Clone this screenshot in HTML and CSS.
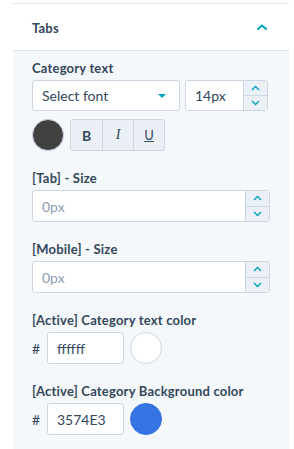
FILE: index.html
```html
<!DOCTYPE html>
<html>
<head>
<meta charset="utf-8">
<link rel="stylesheet" href="styles.css">
</head>
<body>
<div class="panel">
  <div class="panel-header">
    <span class="panel-title">Tabs</span>
    <svg class="chev-up" width="10" height="6" viewBox="0 0 10 6"><path d="M1 5 L5 1.5 L9 5" fill="none" stroke="#00a4bd" stroke-width="2" stroke-linecap="round" stroke-linejoin="round"/></svg>
  </div>
  <div class="panel-body">
    <div class="field">
      <div class="label">Category text</div>
      <div class="row">
        <div class="select">
          <span>Select font</span>
          <svg class="caret" width="8" height="4" viewBox="0 0 8 4"><path d="M0 0 L8 0 L4 4 Z" fill="#00a4bd"/></svg>
        </div>
        <div class="num num-small">
          <div class="num-value">14px</div>
          <div class="stepper">
            <div class="step"><svg width="9" height="6" viewBox="0 0 9 6"><path d="M1 5 L4.5 1.5 L8 5" fill="none" stroke="#00a4bd" stroke-width="1.4"/></svg></div>
            <div class="step"><svg width="9" height="6" viewBox="0 0 9 6"><path d="M1 1 L4.5 4.5 L8 1" fill="none" stroke="#00a4bd" stroke-width="1.4"/></svg></div>
          </div>
        </div>
      </div>
      <div class="row row-style">
        <div class="swatch swatch-dark"></div>
        <div class="btn-group">
          <div class="tbtn tb-b">B</div>
          <div class="tbtn tb-i">I</div>
          <div class="tbtn tb-u">U</div>
        </div>
      </div>
    </div>

    <div class="field">
      <div class="label">[Tab] - Size</div>
      <div class="num num-wide">
        <div class="num-value placeholder">0px</div>
        <div class="stepper">
          <div class="step"><svg width="9" height="6" viewBox="0 0 9 6"><path d="M1 5 L4.5 1.5 L8 5" fill="none" stroke="#00a4bd" stroke-width="1.4"/></svg></div>
          <div class="step"><svg width="9" height="6" viewBox="0 0 9 6"><path d="M1 1 L4.5 4.5 L8 1" fill="none" stroke="#00a4bd" stroke-width="1.4"/></svg></div>
        </div>
      </div>
    </div>

    <div class="field">
      <div class="label">[Mobile] - Size</div>
      <div class="num num-wide">
        <div class="num-value placeholder">0px</div>
        <div class="stepper">
          <div class="step"><svg width="9" height="6" viewBox="0 0 9 6"><path d="M1 5 L4.5 1.5 L8 5" fill="none" stroke="#00a4bd" stroke-width="1.4"/></svg></div>
          <div class="step"><svg width="9" height="6" viewBox="0 0 9 6"><path d="M1 1 L4.5 4.5 L8 1" fill="none" stroke="#00a4bd" stroke-width="1.4"/></svg></div>
        </div>
      </div>
    </div>

    <div class="field">
      <div class="label">[Active] Category text color</div>
      <div class="row color-row">
        <span class="hash">#</span>
        <div class="hex">ffffff</div>
        <div class="swatch swatch-white"></div>
      </div>
    </div>

    <div class="field">
      <div class="label">[Active] Category Background color</div>
      <div class="row color-row">
        <span class="hash">#</span>
        <div class="hex">3574E3</div>
        <div class="swatch swatch-blue"></div>
      </div>
    </div>
  </div>
</div>
</body>
</html>
```

FILE: styles.css
```css
* { box-sizing: border-box; }
html, body { margin: 0; padding: 0; background: #ffffff; }
body {
  font-family: "Lato", "Noto Sans", sans-serif;
  color: #33475b;
  height: 449px;
  overflow: hidden;
}
.panel {
  margin: 3px 5px 0 13px;
  border-top: 1px solid #dfe3eb;
  height: 446px;
  display: flex;
  flex-direction: column;
}
.panel-header {
  flex: none;
  height: 47px;
  background: #ffffff;
  border-bottom: 1px solid #dfe3eb;
  display: flex;
  align-items: center;
  justify-content: space-between;
  padding: 0 22px 0 19px;
}
.panel-title {
  font-size: 13px;
  font-weight: 700;
  line-height: 16px;
  letter-spacing: 0.2px;
  margin-top: 2px;
}
.chev-up { display: block; margin-top: -1px; }
.panel-body {
  flex: 1;
  background: #f5f8fa;
  padding: 9px 0 0 19px;
}
.field { margin-bottom: 19px; }
.label {
  font-size: 13px;
  font-weight: 700;
  line-height: 16px;
  letter-spacing: 0.2px;
  margin-bottom: 4px;
}
.row { display: flex; align-items: center; }
.select {
  flex: none;
  width: 148px;
  height: 31px;
  background: #ffffff;
  border: 1px solid #cbd6e2;
  border-radius: 3px;
  display: flex;
  align-items: center;
  justify-content: space-between;
  padding: 0 13px 0 9px;
  font-size: 14px;
}
.caret { display: block; }
.num {
  flex: none;
  height: 31px;
  background: #ffffff;
  border: 1px solid #cbd6e2;
  border-radius: 3px;
  display: flex;
  overflow: hidden;
}
.num-small { width: 83px; margin-left: 5px; }
.num-wide { width: 238px; height: 32px; }
.num-value {
  flex: 1;
  display: flex;
  align-items: center;
  padding-left: 9px;
  font-size: 14px;
}
.placeholder { color: #8a9db3; }
.stepper {
  width: 24px;
  border-left: 1px solid #cbd6e2;
  background: #eaf0f6;
  display: flex;
  flex-direction: column;
}
.step {
  flex: 1;
  display: flex;
  align-items: center;
  justify-content: center;
}
.step + .step { border-top: 1px solid #cbd6e2; }
.step svg { display: block; }
.row-style { margin-top: 8px; }
.swatch {
  width: 32px;
  height: 32px;
  border-radius: 50%;
  border: 1px solid #cbd6e2;
  flex: none;
}
.swatch-dark { background: #414141; }
.swatch-white { background: #ffffff; }
.swatch-blue { background: #3574e3; border-color: #3574e3; }
.btn-group {
  margin-left: 6px;
  display: flex;
  height: 32px;
  border: 1px solid #cbd6e2;
  border-radius: 3px;
  background: #eaf0f6;
  overflow: hidden;
}
.tbtn {
  width: 31px;
  display: flex;
  align-items: center;
  justify-content: center;
  font-size: 13px;
  color: #33475b;
}
.tbtn + .tbtn { border-left: 1px solid #cbd6e2; }
.tb-b { font-weight: 700; font-size: 14px; }
.tb-i { font-family: "Liberation Serif", serif; font-style: italic; font-size: 14px; }
.tb-u { text-decoration: underline; font-size: 13px; }
.color-row { height: 32px; }
.hash {
  width: 15px;
  font-size: 14px;
  color: #33475b;
}
.hex {
  width: 77px;
  height: 32px;
  background: #ffffff;
  border: 1px solid #cbd6e2;
  border-radius: 3px;
  display: flex;
  align-items: center;
  padding-left: 9px;
  font-size: 14px;
  margin-right: 6px;
}
```
